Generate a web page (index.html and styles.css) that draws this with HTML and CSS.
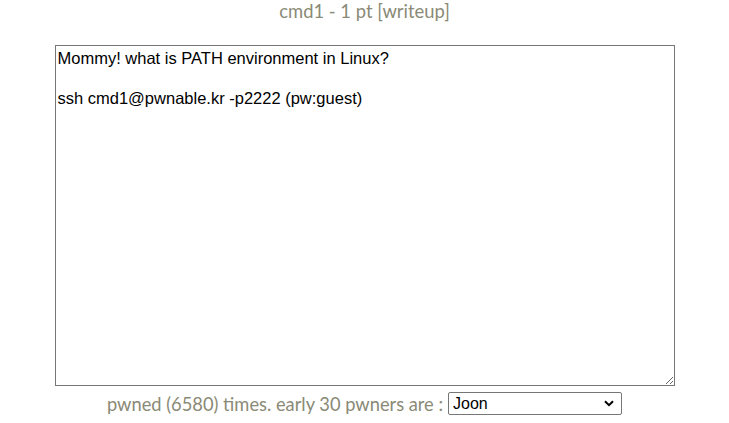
FILE: index.html
```html
<!DOCTYPE html>
<html>
<head>
<meta charset="utf-8">
<link rel="stylesheet" href="styles.css">
</head>
<body>
<div class="page">
  <div class="title">cmd1 - 1 pt [writeup]</div>
  <textarea class="desc" readonly>Mommy! what is PATH environment in Linux?

ssh cmd1@pwnable.kr -p2222 (pw:guest)</textarea>
  <div class="pwned">
    <span>pwned (6580) times. early 30 pwners are :</span>
    <span class="select-wrap">
      <select class="pwners"><option>Joon</option></select>
      <svg class="chev" width="10" height="7" viewBox="0 0 10 7"><path d="M1 1.2 L5 5.2 L9 1.2" fill="none" stroke="#000" stroke-width="2"/></svg>
    </span>
  </div>
</div>
</body>
</html>
```

FILE: styles.css
```css
html, body {
  margin: 0;
  padding: 0;
  background: #ffffff;
}
.page {
  display: flex;
  flex-direction: column;
  align-items: center;
  font-family: "Lato", "Open Sans", sans-serif;
  color: #8a8a76;
}
.title {
  font-size: 18.4px;
  line-height: 22px;
  height: 45px;
}
.desc {
  box-sizing: border-box;
  width: 620px;
  height: 341px;
  margin: 0;
  padding: 2px 2px;
  border: 1px solid #767676;
  font-family: "Liberation Sans", Arial, sans-serif;
  font-size: 16.5px;
  line-height: 20px;
  color: #000;
  resize: both;
}
.pwned {
  display: flex;
  align-items: center;
  gap: 5px;
  margin-top: 6px;
  font-size: 18.3px;
}
.select-wrap {
  position: relative;
  display: flex;
}
.pwners {
  -webkit-appearance: none;
  appearance: none;
  box-sizing: border-box;
  width: 174px;
  height: 23px;
  padding: 0 4px;
  font-family: "Liberation Sans", Arial, sans-serif;
  font-size: 16px;
  color: #000;
  border: 1px solid #767676;
  border-radius: 2px;
  background: #fff;
}
.chev {
  position: absolute;
  right: 8px;
  top: 8px;
  pointer-events: none;
}
```
